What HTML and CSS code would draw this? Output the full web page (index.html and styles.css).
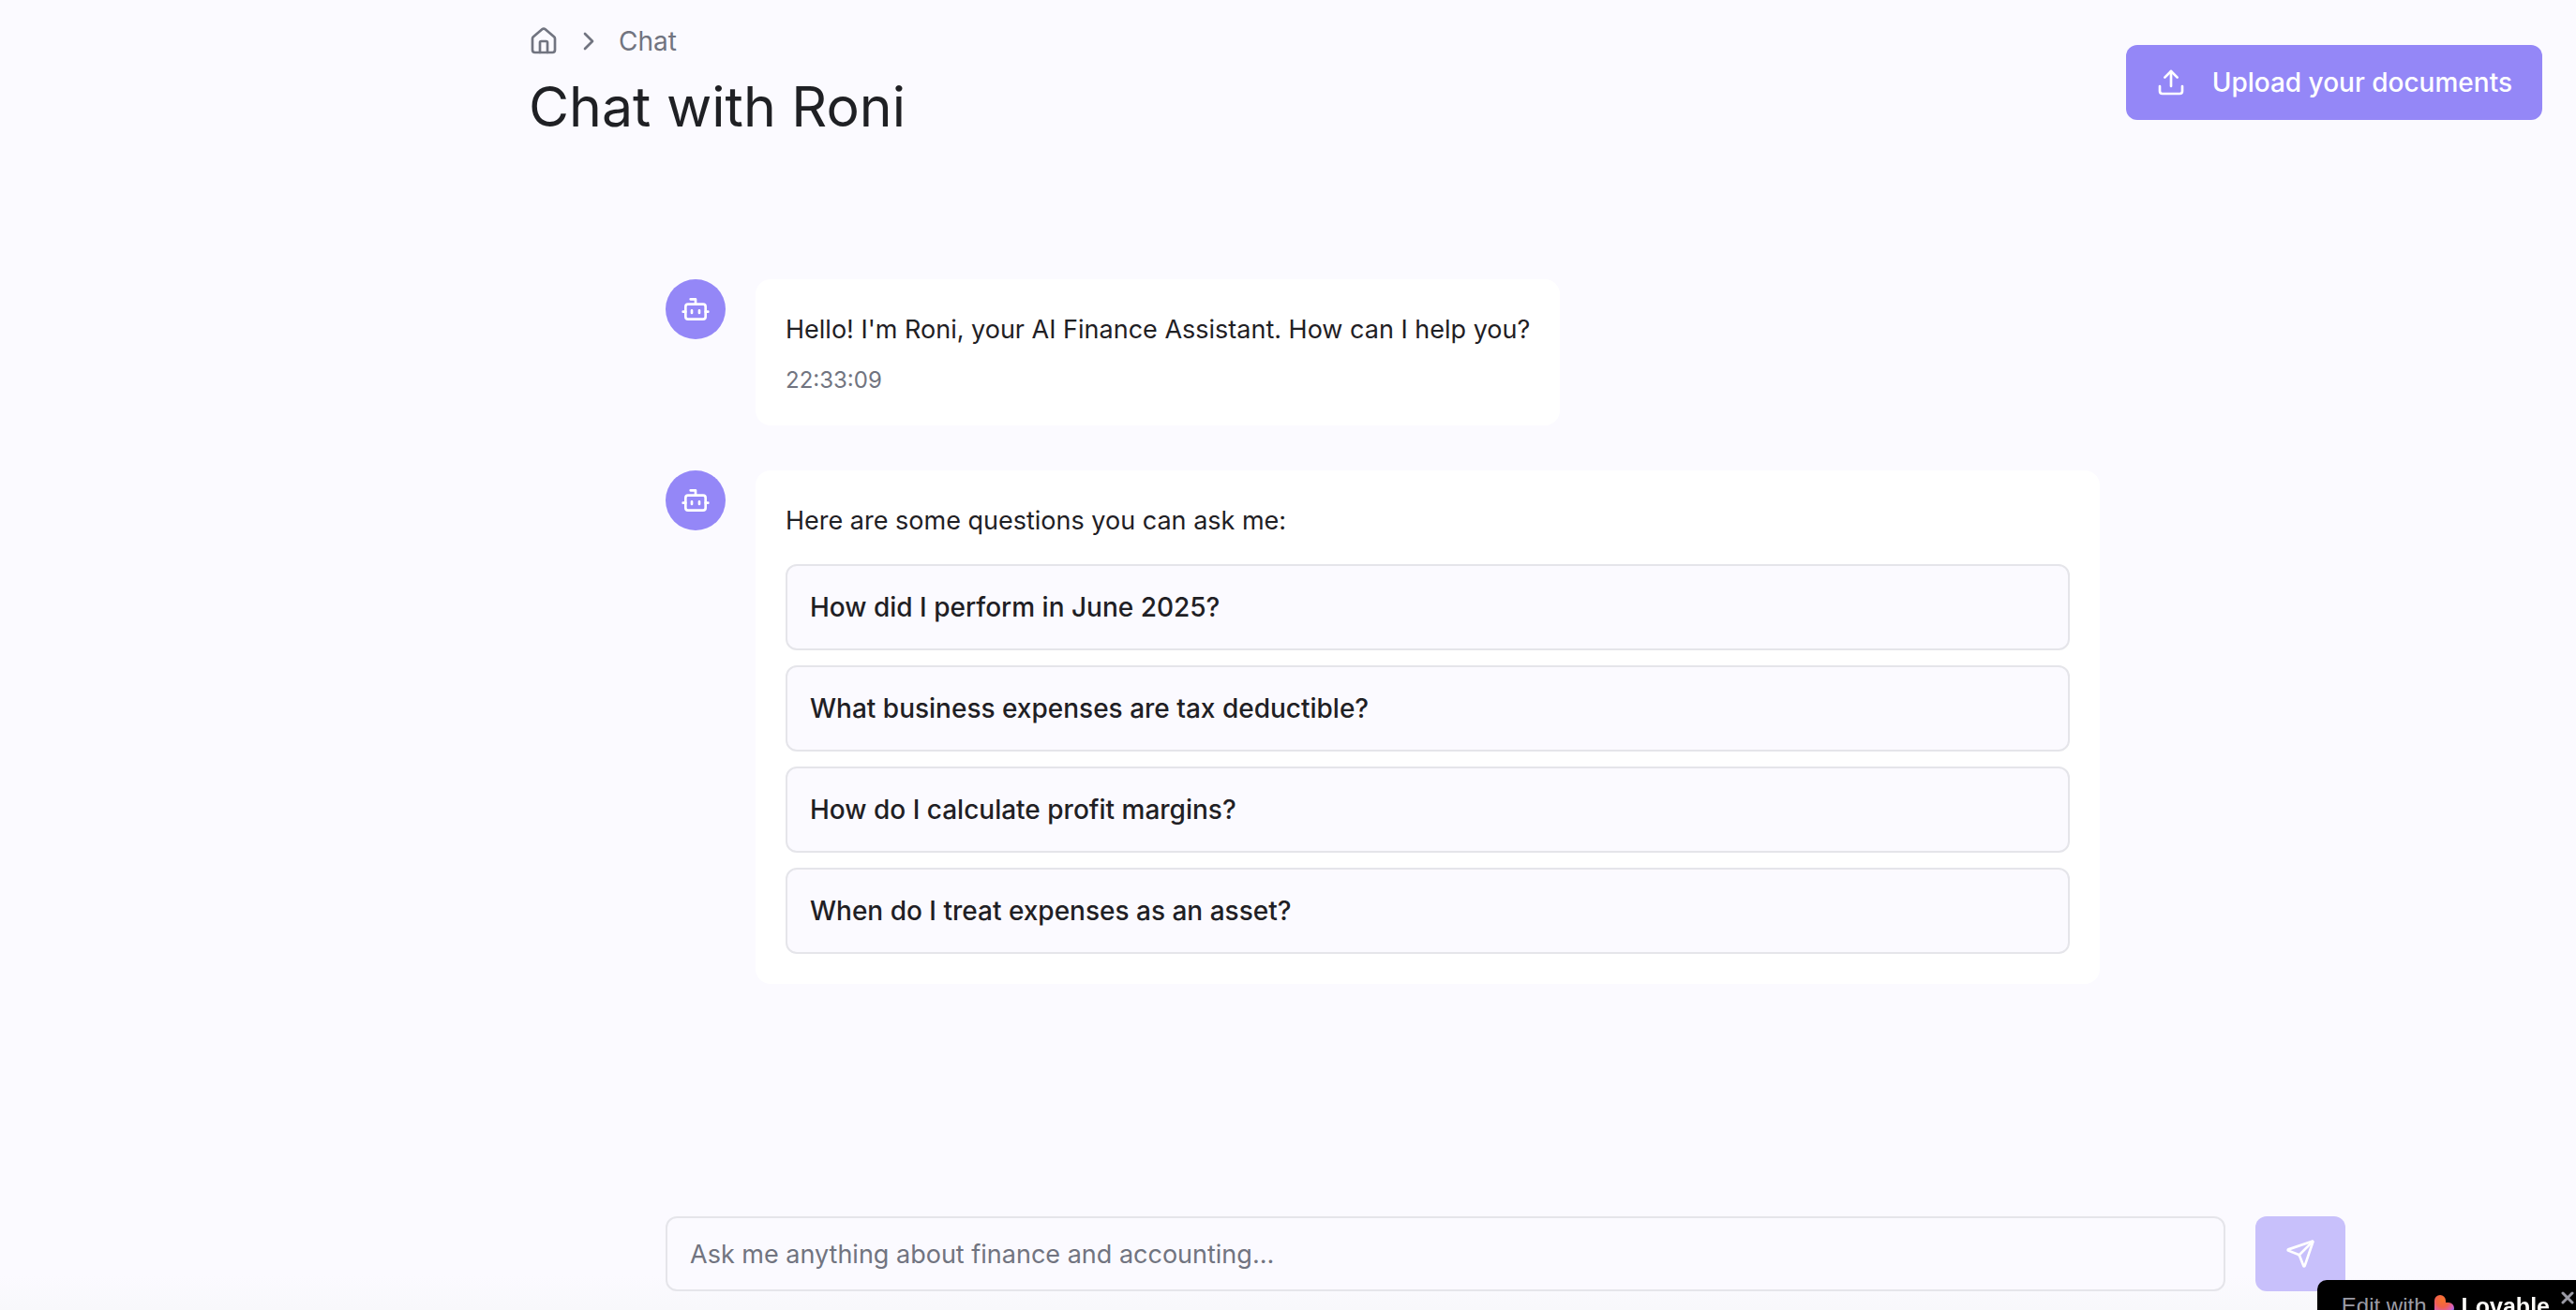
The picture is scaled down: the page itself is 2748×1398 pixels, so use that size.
FILE: index.html
```html
<!DOCTYPE html>
<html lang="en">
<head>
<meta charset="utf-8">
<meta name="viewport" content="width=device-width, initial-scale=1">
<title>Chat with Roni</title>
<link rel="stylesheet" href="styles.css">
</head>
<body>
<svg class="sprite" aria-hidden="true">
  <symbol id="bot" viewBox="0 0 24 24"><path d="M12 8V4H8"/><rect width="16" height="12" x="4" y="8" rx="2"/><path d="M2 14h2M20 14h2M15 13v2M9 13v2"/></symbol>
</svg>
<main class="page">
  <header class="header">
    <div class="heading">
      <nav class="breadcrumb" aria-label="Breadcrumb">
        <a class="crumb" href="#" aria-label="Home"><svg class="icon home" viewBox="0 0 24 24"><path d="M15 21v-8a1 1 0 0 0-1-1h-4a1 1 0 0 0-1 1v8"/><path d="M3 10a2 2 0 0 1 .709-1.528l7-5.999a2 2 0 0 1 2.582 0l7 5.999A2 2 0 0 1 21 10v9a2 2 0 0 1-2 2H5a2 2 0 0 1-2-2z"/></svg></a>
        <svg class="icon chevron" viewBox="0 0 24 24"><path d="m9 18 6-6-6-6"/></svg>
        <span>Chat</span>
      </nav>
      <h1 class="title">Chat with Roni</h1>
    </div>
    <button class="upload" type="button"><svg class="icon" viewBox="0 0 24 24"><path d="M12 3v12"/><path d="m17 8-5-5-5 5"/><path d="M21 15v4a2 2 0 0 1-2 2H5a2 2 0 0 1-2-2v-4"/></svg>Upload your documents</button>
  </header>
  <section class="messages" aria-label="Messages">
    <article class="message">
      <span class="avatar"><svg class="icon" viewBox="0 0 24 24"><use href="#bot"/></svg></span>
      <div class="bubble">
        <p class="text">Hello! I'm Roni, your AI Finance Assistant. How can I help you?</p>
        <time class="time">22:33:09</time>
      </div>
    </article>
    <article class="message">
      <span class="avatar"><svg class="icon" viewBox="0 0 24 24"><use href="#bot"/></svg></span>
      <div class="bubble wide">
        <p class="text">Here are some questions you can ask me:</p>
        <div class="questions">
          <button class="question" type="button">How did I perform in June 2025?</button>
          <button class="question" type="button">What business expenses are tax deductible?</button>
          <button class="question" type="button">How do I calculate profit margins?</button>
          <button class="question" type="button">When do I treat expenses as an asset?</button>
        </div>
      </div>
    </article>
  </section>
  <form class="composer">
    <input class="prompt" type="text" aria-label="Your question" placeholder="Ask me anything about finance and accounting...">
    <button class="send" type="button" aria-label="Send"><svg class="icon" viewBox="0 0 24 24"><path d="M14.536 21.686a.5.5 0 0 0 .937-.024l6.5-19a.496.496 0 0 0-.635-.635l-19 6.5a.5.5 0 0 0-.024.937l7.93 3.18a2 2 0 0 1 1.112 1.11z"/><path d="m21.854 2.147-10.94 10.939"/></svg></button>
  </form>
</main>
<aside class="badge">
  <a class="badge-link" href="#">Edit with
    <svg class="heart" viewBox="0 0 21 24" aria-hidden="true"><defs><radialGradient id="glow" cx="40%" cy="22%" r="80%"><stop offset="0" stop-color="#f5752c"/><stop offset=".4" stop-color="#f2604a"/><stop offset=".75" stop-color="#d75fc0"/><stop offset="1" stop-color="#5b7cf8"/></radialGradient></defs><path fill="url(#glow)" d="M0 6a6 6 0 0 1 12 0v2h3a6 6 0 0 1 6 6c0 4-4 7-9 10H0z"/></svg>
    <strong class="brand">Lovable</strong></a>
  <button class="close" type="button" aria-label="Close"><svg viewBox="0 0 14 14"><path d="M2 2l10 10M12 2 2 12"/></svg></button>
</aside>
</body>
</html>
```
FILE: styles.css
```css
* { box-sizing: border-box; }

body {
  margin: 0;
  height: 100vh;
  overflow: hidden;
  background: linear-gradient(#fbfaff calc(100% - 36px), #f8f8fb);
  color: #1f2024;
  font: 28px/44px Inter, "Liberation Sans", sans-serif;
}

h1, p { margin: 0; }

button, input { font: inherit; color: inherit; }

button { cursor: pointer; }

.sprite { display: none; }

.icon {
  width: 32px;
  height: 32px;
  flex: none;
  fill: none;
  stroke: currentColor;
  stroke-width: 2;
  stroke-linecap: round;
  stroke-linejoin: round;
}

.page {
  display: flex;
  flex-direction: column;
  height: 100%;
  margin-left: 464px;
  padding: 20px 36px;
}

.header {
  display: flex;
  justify-content: space-between;
  align-items: flex-start;
  padding-left: 64px;
}

.breadcrumb {
  display: flex;
  align-items: center;
  gap: 16px;
  height: 48px;
  color: #717480;
}

.crumb { display: flex; color: inherit; }

.title {
  font-size: 59px;
  font-weight: 400;
  line-height: 92px;
}

.upload {
  display: flex;
  align-items: center;
  gap: 28px;
  height: 80px;
  margin-top: 28px;
  padding: 0 32px;
  border: 0;
  border-radius: 12px;
  background: #9487f7;
  color: #fff;
  font-weight: 500;
}

.messages {
  display: flex;
  flex: 1;
  flex-direction: column;
  gap: 48px;
  width: 100%;
  max-width: 1792px;
  margin: 0 auto;
  padding-top: 138px;
}

.message {
  display: flex;
  align-items: flex-start;
  gap: 32px;
}

.avatar {
  display: grid;
  flex: none;
  place-items: center;
  width: 64px;
  height: 64px;
  border-radius: 50%;
  background: #9487f7;
  color: #fff;
}

.bubble {
  display: flex;
  flex-direction: column;
  gap: 16px;
  max-width: 80%;
  padding: 32px;
  border-radius: 16px;
  background: #fff;
}

.wide {
  gap: 24px;
  width: 80%;
}

.text { font-size: 27px; }

.time {
  color: #717480;
  font-size: 24px;
  line-height: 32px;
}

.questions {
  display: flex;
  flex-direction: column;
  gap: 16px;
}

.question {
  height: 92px;
  padding: 0 24px;
  border: 2px solid #e5e5ea;
  border-radius: 12px;
  background: #fbfaff;
  font-weight: 500;
  text-align: left;
}

.composer {
  display: flex;
  gap: 32px;
  width: 100%;
  max-width: 1792px;
  margin: 0 auto;
}

.prompt {
  flex: 1;
  height: 80px;
  padding: 0 24px;
  border: 2px solid #e5e5ea;
  border-radius: 12px;
  background: #fbfaff;
  font-size: 27px;
}

.prompt::placeholder { color: #717480; opacity: 1; }

.send {
  display: grid;
  place-items: center;
  width: 96px;
  height: 80px;
  padding: 0;
  border: 0;
  border-radius: 12px;
  background: #c8c0fb;
  color: #fff;
}

.badge {
  position: fixed;
  right: 0;
  bottom: -24px;
  display: flex;
  gap: 12px;
  height: 56px;
  padding: 0 2px 0 26px;
  border-radius: 10px 0 0 10px;
  background: #000;
  color: #9b9ba5;
  font: 24px/56px "Liberation Sans", Arial, sans-serif;
}

.badge-link {
  display: flex;
  align-items: center;
  gap: 8px;
  color: inherit;
  text-decoration: none;
}

.heart { width: 21px; height: 24px; }

.brand { color: #fcfbf8; font-size: 25px; }

.close {
  align-self: flex-start;
  width: 14px;
  height: 14px;
  margin-top: 12px;
  padding: 0;
  border: 0;
  background: none;
  color: #9b9ba5;
}

.close svg {
  display: block;
  fill: none;
  stroke: currentColor;
  stroke-width: 3;
  stroke-linecap: round;
}
```
